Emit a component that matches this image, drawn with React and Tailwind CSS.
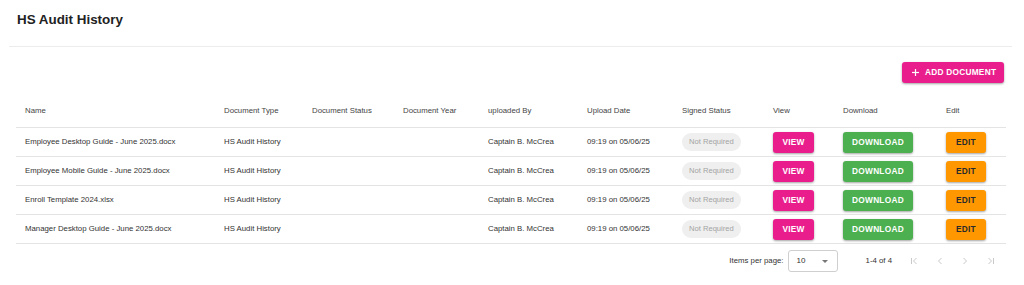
import React from "react";

const rows = [
  "Employee Desktop Guide - June 2025.docx",
  "Employee Mobile Guide - June 2025.docx",
  "Enroll Template 2024.xlsx",
  "Manager Desktop Guide - June 2025.docx",
];

const headers = [
  "Name",
  "Document Type",
  "Document Status",
  "Document Year",
  "uploaded By",
  "Upload Date",
  "Signed Status",
  "View",
  "Download",
  "Edit",
];

const gridCols =
  "grid grid-cols-[199px_88px_91px_85px_99px_95px_91px_70px_103px_69px]";

function Btn({ className, children }) {
  return (
    <button
      className={
        "h-[21px] rounded-[3px] font-bold text-[8.3px] tracking-[0.03em] flex items-center justify-center shadow-[0_1px_2px_rgba(0,0,0,0.25),0_1px_3px_rgba(0,0,0,0.12)] " +
        className
      }
    >
      {children}
    </button>
  );
}

function Chevron({ dir, bar }) {
  return (
    <svg width="10" height="10" viewBox="0 0 10 10" fill="none" stroke="#c9c9c9" strokeWidth="1">
      {dir === "left" ? (
        <polyline points="6.5,2 3.5,5 6.5,8" />
      ) : (
        <polyline points="3.5,2 6.5,5 3.5,8" />
      )}
      {bar === "left" && <line x1="1.5" y1="2" x2="1.5" y2="8" />}
      {bar === "right" && <line x1="8.5" y1="2" x2="8.5" y2="8" />}
    </svg>
  );
}

export default function App() {
  return (
    <div
      className="w-[1024px] h-[285px] bg-white overflow-hidden text-[#333]"
      style={{ fontFamily: '"Liberation Sans", Arial, sans-serif' }}
    >
      <div className="pl-[17px] pt-[10px]">
        <h1 className="text-[13.4px] leading-[20px] font-bold text-[#222]">HS Audit History</h1>
      </div>
      <div className="ml-[9px] mr-[12px] mt-[16px] h-px bg-[#ececec]" />
      <div className="pl-[16px] pr-[18px]">
        <div className="flex justify-end mt-[15px] pr-[2px]">
          <Btn className="w-[102px] bg-[#e91e8c] text-white justify-start pl-[10px]">
            <svg width="7" height="7" viewBox="0 0 7 7" stroke="white" strokeWidth="1.2">
              <line x1="3.5" y1="0" x2="3.5" y2="7" />
              <line x1="0" y1="3.5" x2="7" y2="3.5" />
            </svg>
            <span className="ml-[6px]">ADD DOCUMENT</span>
          </Btn>
        </div>
        <div className="mt-[11px]">
          <div className={gridCols + " h-[34px] items-center border-b border-[#e4e4e4] text-[7.8px] text-[#444]"}>
            {headers.map((h) => (
              <div key={h} className="pl-[9px]">
                {h}
              </div>
            ))}
          </div>
          {rows.map((name) => (
            <div
              key={name}
              className={gridCols + " h-[29px] items-center border-b border-[#e4e4e4] text-[7.8px] text-[#333]"}
            >
              <div className="pl-[9px]">{name}</div>
              <div className="pl-[9px]">HS Audit History</div>
              <div className="pl-[9px]"></div>
              <div className="pl-[9px]"></div>
              <div className="pl-[9px]">Captain B. McCrea</div>
              <div className="pl-[9px]">09:19 on 05/06/25</div>
              <div className="pl-[9px]">
                <span className="inline-flex items-center h-[18px] px-[7px] rounded-full bg-[#efefef] text-[#a3a3a3] text-[7.6px]">
                  Not Required
                </span>
              </div>
              <div className="pl-[9px]">
                <Btn className="w-[41px] bg-[#e91e8c] text-white">VIEW</Btn>
              </div>
              <div className="pl-[9px]">
                <Btn className="w-[70px] bg-[#4caf50] text-white">DOWNLOAD</Btn>
              </div>
              <div className="pl-[9px]">
                <Btn className="w-[40px] bg-[#ff9800] text-[#2a2a2a]">EDIT</Btn>
              </div>
            </div>
          ))}
          <div className="flex justify-end items-center h-[34px] pr-[4px] text-[7.8px] text-[#333]">
            <span>Items per page:</span>
            <div className="ml-[4px] w-[50px] h-[22px] border border-[#cfcfcf] rounded-[3px] flex items-center justify-between pl-[8px] pr-[9px]">
              <span className="text-[8px]">10</span>
              <svg width="6" height="3" viewBox="0 0 6 3">
                <polygon points="0,0 6,0 3,3" fill="#777" />
              </svg>
            </div>
            <span className="ml-[28px]">1-4 of 4</span>
            <div className="ml-[10px] flex">
              <div className="w-[25px] flex justify-center"><Chevron dir="left" bar="left" /></div>
              <div className="w-[25px] flex justify-center"><Chevron dir="left" /></div>
              <div className="w-[25px] flex justify-center"><Chevron dir="right" /></div>
              <div className="w-[25px] flex justify-center"><Chevron dir="right" bar="right" /></div>
            </div>
          </div>
        </div>
      </div>
    </div>
  );
}
